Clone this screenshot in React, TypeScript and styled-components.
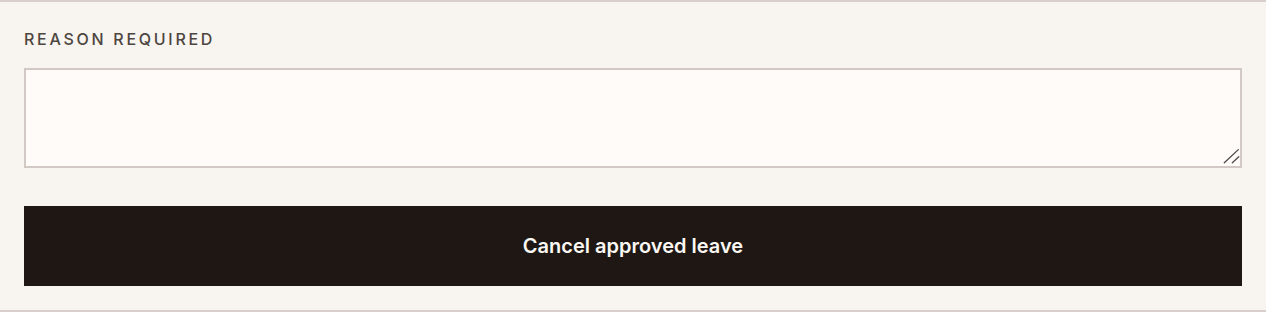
import React from "react";
import styled, { createGlobalStyle } from "styled-components";

const Global = createGlobalStyle`
  html, body { margin: 0; padding: 0; background: #f8f4ef; }
  * { box-sizing: border-box; }
`;

const Panel = styled.section`
  width: 1266px;
  height: 312px;
  background: #f8f4ef;
  border-top: 2px solid #d8cfca;
  border-bottom: 2px solid #d8cfca;
  padding: 27px 24px 0 24px;
  display: flex;
  flex-direction: column;
  font-family: Inter, "Liberation Sans", sans-serif;
`;

const Label = styled.label`
  display: block;
  font-size: 16px;
  font-weight: 500;
  letter-spacing: 0.17em;
  text-transform: uppercase;
  color: #4d4540;
  line-height: 20px;
  margin-bottom: 19px;
`;

const AreaWrap = styled.div`
  position: relative;
  width: 100%;
  height: 100px;
`;

const Area = styled.textarea`
  display: block;
  width: 100%;
  height: 100%;
  background: #fffbf9;
  border: 2px solid #d3c9c4;
  border-radius: 0;
  outline: none;
  margin: 0;
  padding: 10px 12px;
  font-family: inherit;
  font-size: 15px;
  resize: none;
`;

const Grip = styled.svg`
  position: absolute;
  right: 2px;
  bottom: 2px;
  width: 17px;
  height: 17px;
  pointer-events: none;
`;

const Button = styled.button`
  margin-top: 38px;
  width: 100%;
  height: 80px;
  border: none;
  border-radius: 0;
  background: #1e1714;
  color: #fbf7f3;
  font-family: Inter, "Liberation Sans", sans-serif;
  font-size: 20px;
  font-weight: 600;
  letter-spacing: 0;
  cursor: pointer;
`;

export default function App() {
  return (
    <>
      <Global />
      <Panel>
        <Label htmlFor="reason">Reason required</Label>
        <AreaWrap>
          <Area id="reason" />
          <Grip viewBox="0 0 17 17" aria-hidden="true">
            <g stroke="#4f4a47" strokeWidth="1.3" strokeLinecap="round">
              <line x1="15.3" y1="0.6" x2="1.3" y2="13.8" />
              <line x1="15.8" y1="7.8" x2="9.3" y2="13.8" />
            </g>
          </Grip>
        </AreaWrap>
        <Button type="button">Cancel approved leave</Button>
      </Panel>
    </>
  );
}
